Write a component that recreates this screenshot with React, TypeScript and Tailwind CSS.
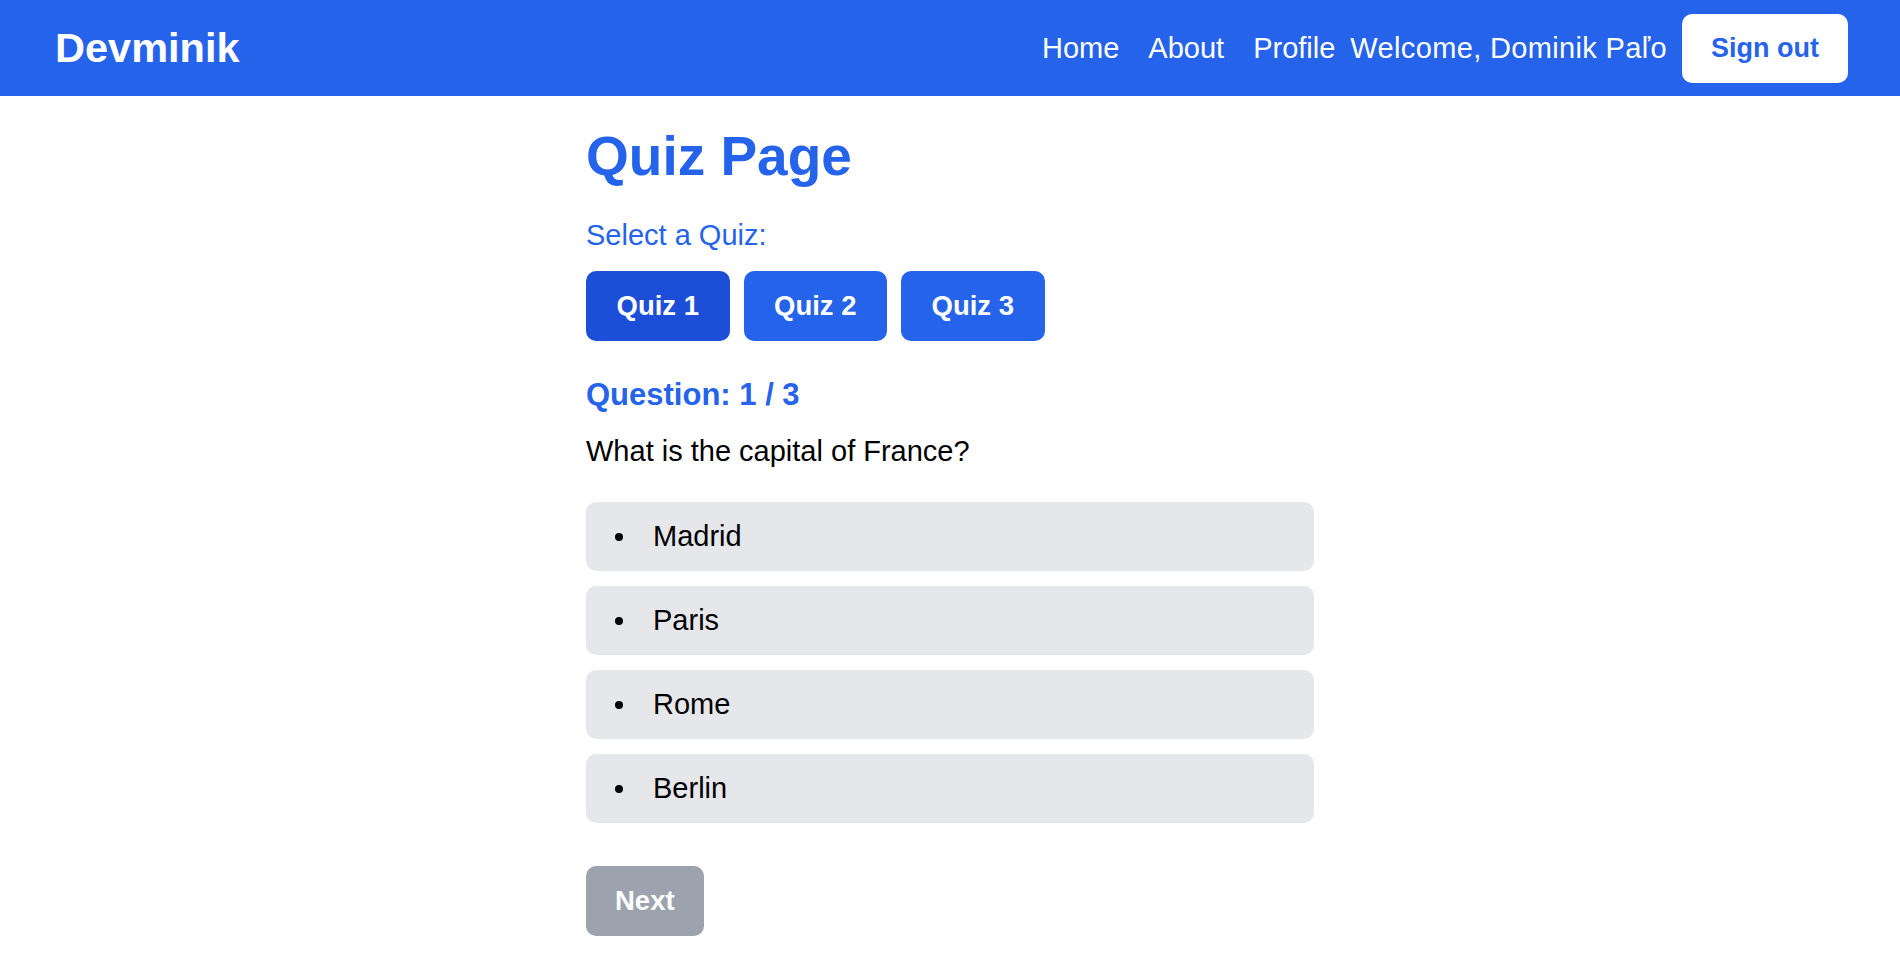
import { useState } from "react";

const quizzes = ["Quiz 1", "Quiz 2", "Quiz 3"];
const answers = ["Madrid", "Paris", "Rome", "Berlin"];

export default function App() {
  const [active, setActive] = useState(0);

  return (
    <div className="min-h-screen bg-white font-['Liberation_Sans',Arial,sans-serif]">
      <header className="flex h-[96px] items-center justify-between bg-[#2563eb] pl-[55px] pr-[52px] text-white">
        <h1 className="text-[41.5px] font-bold leading-[48px]">Devminik</h1>
        <nav className="flex items-center text-[29px] leading-[39px]">
          <ul className="flex items-center gap-[29px]">
            <li><a href="#">Home</a></li>
            <li><a href="#">About</a></li>
            <li><a href="#">Profile</a></li>
          </ul>
          <span className="ml-[15px] tracking-[0.35px]">Welcome, Dominik Paľo</span>
          <button
            type="button"
            className="ml-[15px] h-[69px] rounded-[10px] bg-white px-[29px] text-[27px] font-bold text-[#2563eb]"
          >
            Sign out
          </button>
        </nav>
      </header>

      <main className="mx-auto w-[728px] pt-[30px]">
        <h2 className="text-[55px] font-bold leading-[60px] text-[#2563eb]">Quiz Page</h2>
        <p className="mt-[30px] text-[29px] leading-[39px] text-[#2563eb]">Select a Quiz:</p>
        <div className="mt-[16px] flex gap-[14px]">
          {quizzes.map((quiz, i) => (
            <button
              key={quiz}
              type="button"
              onClick={() => setActive(i)}
              className={
                i === active
                  ? "h-[70px] rounded-[10px] bg-[#1d4ed8] px-[30.5px] text-[27.5px] font-bold text-white"
                  : "h-[70px] rounded-[10px] bg-[#2563eb] px-[30.5px] text-[27.5px] font-bold text-white"
              }
            >
              {quiz}
            </button>
          ))}
        </div>

        <h3 className="mt-[34px] text-[31px] font-bold leading-[39px] text-[#2563eb]">Question: 1 / 3</h3>
        <p className="mt-[18px] text-[29px] leading-[39px] text-black">What is the capital of France?</p>

        <ul className="mt-[31px] flex flex-col gap-[15px]">
          {answers.map((answer) => (
            <li
              key={answer}
              className="flex h-[69px] items-center rounded-[10px] bg-[#e5e7eb] pl-[29px] text-[29px] text-black"
            >
              <span className="h-[8px] w-[8px] rounded-full bg-black" />
              <span className="ml-[30px]">{answer}</span>
            </li>
          ))}
        </ul>

        <button
          type="button"
          disabled
          className="mt-[43px] h-[70px] rounded-[10px] bg-[#9ca3af] px-[29px] text-[27.5px] font-bold text-white"
        >
          Next
        </button>
      </main>
    </div>
  );
}
